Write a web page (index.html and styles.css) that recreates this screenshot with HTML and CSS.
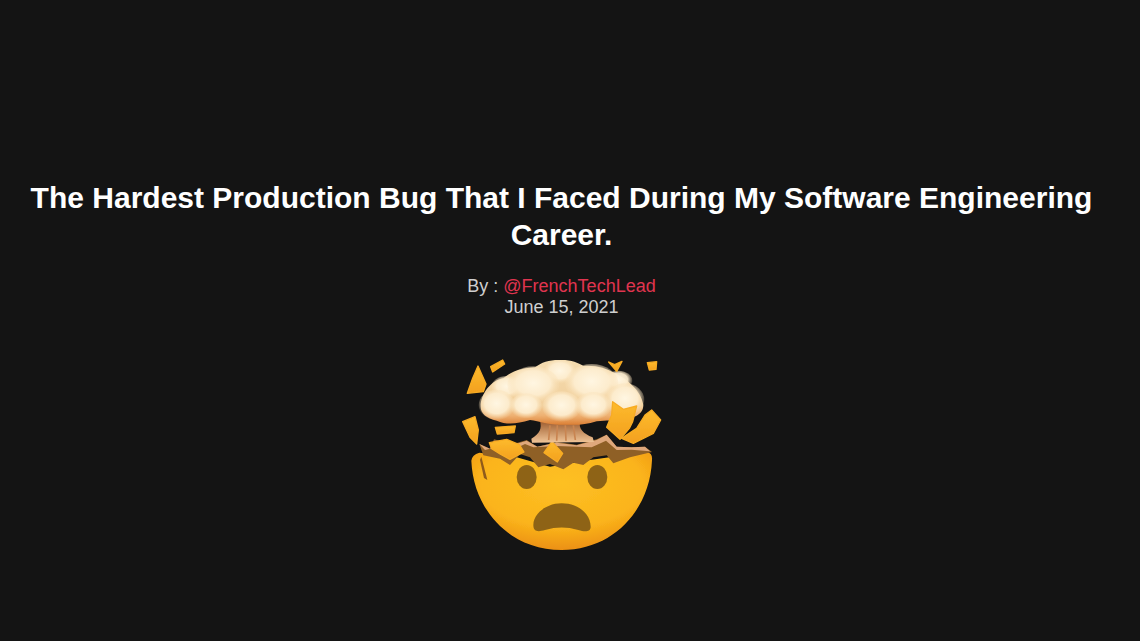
FILE: index.html
```html
<!DOCTYPE html>
<html lang="en">
<head>
<meta charset="utf-8">
<title>The Hardest Production Bug</title>
<link rel="stylesheet" href="styles.css">
</head>
<body>
<main class="page">
  <h1 class="title">The Hardest Production Bug That I Faced During My Software Engineering Career.</h1>
  <p class="meta">By : <a class="author" href="#">@FrenchTechLead</a><br>June 15, 2021</p>
  <svg class="emoji" viewBox="0 0 660 630" width="220" height="210" aria-label="Exploding head">
    <defs>
      <radialGradient id="face" cx="50%" cy="32%" r="72%">
        <stop offset="0" stop-color="#fdc024"/>
        <stop offset="0.62" stop-color="#fbb41b"/>
        <stop offset="1" stop-color="#e98a10"/>
      </radialGradient>
      <linearGradient id="chip" x1="0" y1="0" x2="0" y2="1">
        <stop offset="0" stop-color="#fdbb2d"/>
        <stop offset="1" stop-color="#f3a01e"/>
      </linearGradient>
      <radialGradient id="puff" cx="50%" cy="45%" r="55%">
        <stop offset="0" stop-color="#fff6e2"/>
        <stop offset="0.6" stop-color="#fdedcf" stop-opacity="0.95"/>
        <stop offset="1" stop-color="#f8dcae" stop-opacity="0"/>
      </radialGradient>
      <linearGradient id="stem" x1="0" y1="0" x2="0" y2="1">
        <stop offset="0" stop-color="#9c5a2c"/>
        <stop offset="1" stop-color="#f0c598"/>
      </linearGradient>
      <linearGradient id="cloud" x1="0" y1="0" x2="0" y2="1">
        <stop offset="0" stop-color="#f4dcb0"/>
        <stop offset="0.7" stop-color="#f1cf9c"/>
        <stop offset="0.86" stop-color="#eeb071"/>
        <stop offset="1" stop-color="#dc7f34"/>
      </linearGradient>
      <filter id="soft"><feGaussianBlur stdDeviation="2"/></filter>
    </defs>
    <g filter="url(#soft)">
      <path d="M64 332 Q66 314 88 308 L200 322 L300 350 L420 330 L590 306 Q608 308 606 330 C600 480 490 600 335 600 C180 600 70 480 64 332Z" fill="url(#face)"/>
      <path d="M94 320 L112 390 L102 384 L90 330Z" fill="#8f5a1a"/>
      <path d="M88 282 L120 296 L132 268 L190 282 L230 270 L262 290 L320 276 L380 284 L440 268 L470 254 L500 290 L545 292 L585 290 L606 306 L540 322 L490 340 L470 316 L430 322 L400 345 L370 338 L340 358 L300 342 L265 352 L240 322 L210 312 L180 345 L150 326 L100 316Z" fill="#8f6026"/>
      <path d="M88 282 L120 296 L134 272 L190 284 L230 272 L262 290 L320 278 L380 286 L440 270 L470 254 L500 290 L545 292 L585 290 L600 304 L545 299 L500 300 L468 272 L425 292 L320 288 L250 292 L225 282 L200 294 L130 294 L105 300Z" fill="#dfa87c"/>
      <path class="chip" d="M118 278 L170 268 L208 284 L222 306 L180 328 L150 312 L125 296Z"/>
      <path class="chip" d="M306 274 L338 310 L322 336 L282 308Z"/>
      <path d="M244 266 C270 250 276 236 270 212 L390 212 C385 238 400 250 428 262 L432 276 L246 278Z" fill="url(#stem)"/>
      <path d="M300 226 L296 270 M322 226 L320 272 M346 226 L348 272 M370 226 L376 270" stroke="#c98551" stroke-width="5" fill="none"/>
      <path class="chip" d="M136 232 L196 228 L192 248 L142 252Z"/>
      <path d="M92 170 C92 130 125 90 160 85 C180 68 205 55 255 52 C275 35 305 28 335 30 C365 30 385 38 400 48 C435 45 470 55 495 70 C530 85 575 125 580 165 C580 195 550 205 520 205 C490 215 470 210 440 214 C400 228 370 224 330 224 C290 224 270 214 240 210 C200 222 170 225 140 212 C110 205 92 190 92 170Z" fill="url(#cloud)"/>
      <g fill="url(#puff)">
        <ellipse cx="170" cy="112" rx="46" ry="34"/>
        <ellipse cx="505" cy="92" rx="42" ry="30"/>
        <ellipse cx="330" cy="66" rx="48" ry="36"/>
        <ellipse cx="250" cy="105" rx="78" ry="56"/>
        <ellipse cx="425" cy="100" rx="80" ry="58"/>
        <ellipse cx="525" cy="150" rx="58" ry="50"/>
        <ellipse cx="140" cy="165" rx="54" ry="46"/>
        <ellipse cx="430" cy="168" rx="54" ry="42"/>
        <ellipse cx="228" cy="168" rx="48" ry="38"/>
        <ellipse cx="335" cy="170" rx="58" ry="46"/>
      </g>
      <path class="chip" d="M488 155 L520 178 L560 168 L548 215 L538 235 L510 268 L470 232 L485 195Z"/>
      <path class="chip" d="M605 180 L632 210 L610 250 L550 280 L515 265 L560 235 L585 195Z"/>
      <path class="chip" d="M84 48 L108 102 L100 125 L52 130 L68 85Z"/>
      <path class="chip" d="M122 50 L158 30 L164 42 L128 66Z"/>
      <path class="chip" d="M476 36 L494 44 L516 34 L500 64Z"/>
      <path class="chip" d="M592 38 L620 35 L618 58 L598 60Z"/>
      <path class="chip" d="M38 215 L75 200 L85 240 L80 282 L60 262Z"/>
      <ellipse cx="230" cy="381" rx="30" ry="36" fill="#8e6414"/>
      <ellipse cx="442" cy="381" rx="30" ry="36" fill="#8e6414"/>
      <path d="M250 525 C250 490 290 460 335 460 C382 460 422 490 422 530 C422 546 405 546 385 540 C350 530 320 530 285 540 C265 546 250 546 250 525Z" fill="#8e6414"/>
    </g>
  </svg>
</main>
</body>
</html>
```

FILE: styles.css
```css
html, body {
  margin: 0;
  height: 100%;
  background: #141414;
}

.page {
  box-sizing: border-box;
  height: 641px;
  overflow: hidden;
  padding: 179px 17px 0 0;
  display: flex;
  flex-direction: column;
  align-items: center;
  font-family: "Liberation Sans", Arial, sans-serif;
  text-align: center;
}

.title {
  margin: 0;
  width: 1123px;
  font-size: 30px;
  line-height: 37px;
  font-weight: 700;
  color: #ffffff;
}

.meta {
  margin: 23px 0 0;
  font-size: 18px;
  line-height: 21px;
  color: #cfcfcf;
}

.author {
  color: #e0344f;
  text-decoration: none;
}

.emoji {
  display: block;
  margin: 32px 3px 0 0;
}

.chip {
  fill: url(#chip);
  stroke: #f8ac24;
  stroke-width: 4;
  stroke-linejoin: round;
}
```
